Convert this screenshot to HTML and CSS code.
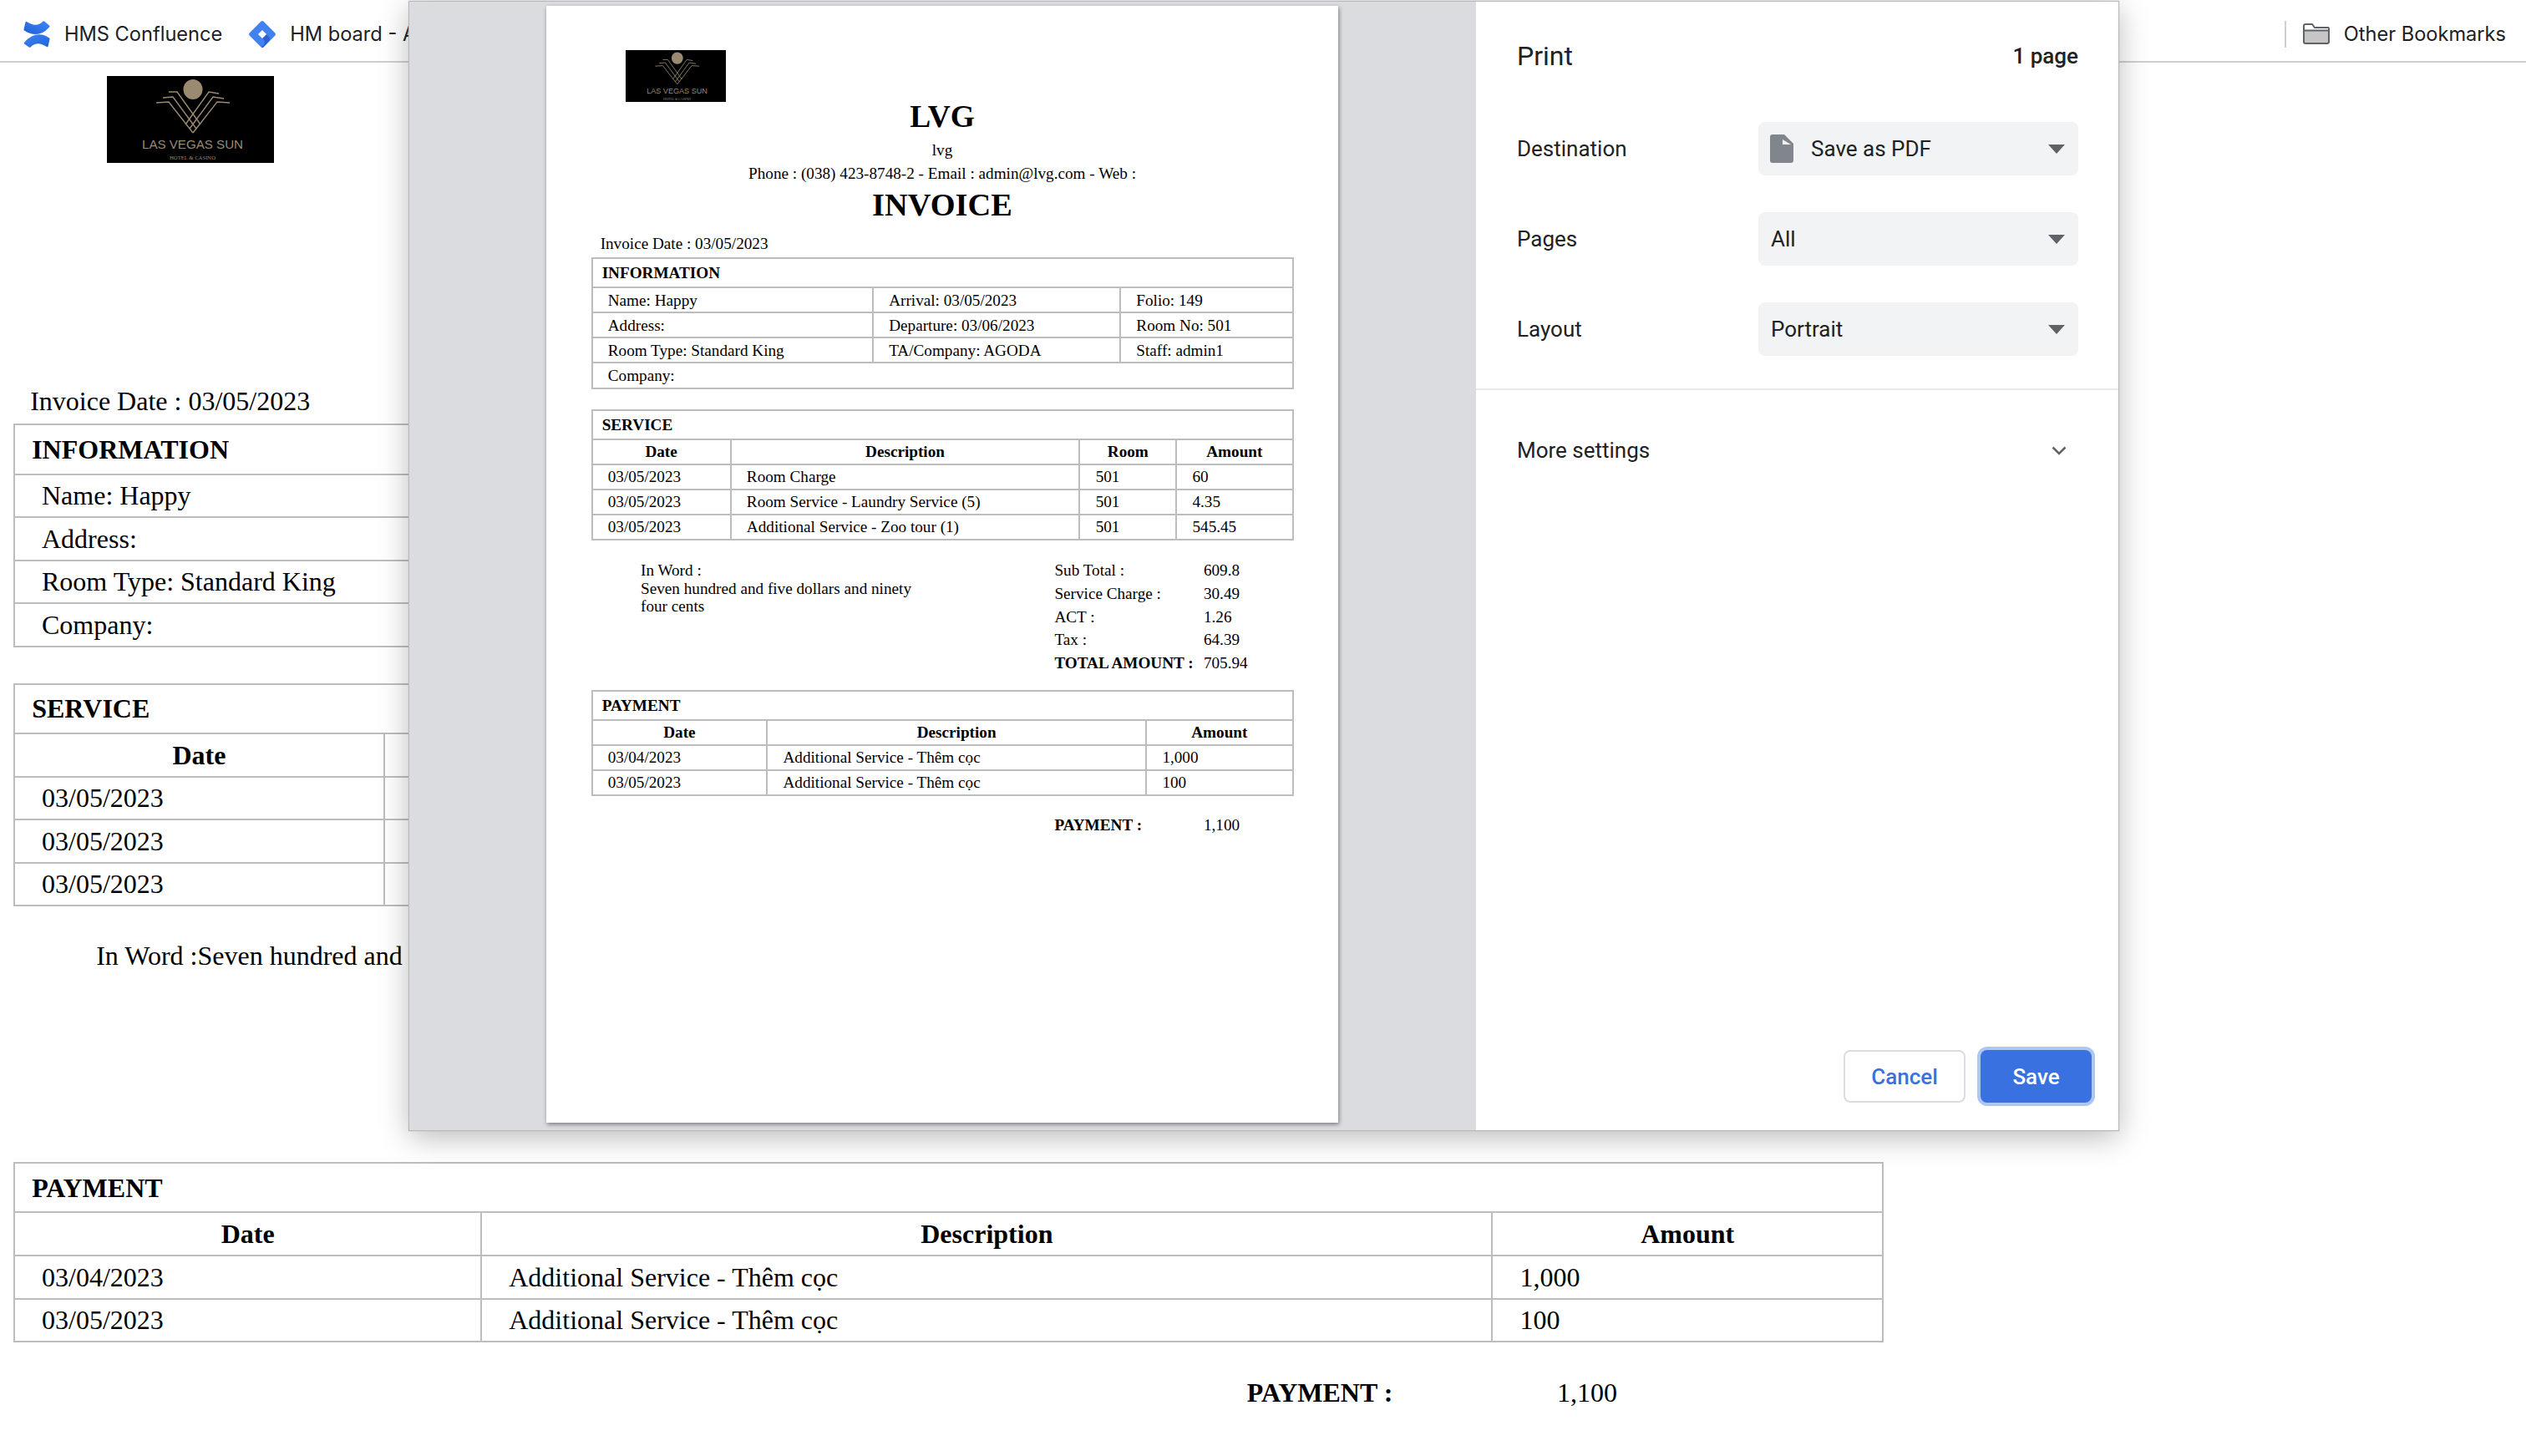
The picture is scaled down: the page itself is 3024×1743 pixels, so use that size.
FILE: index.html
```html
<!DOCTYPE html>
<html lang="en">
<head>
  <meta charset="UTF-8">
  <title>Invoice - Print</title>
  <link rel="stylesheet" href="styles.css">
</head>

<body>
  <!-- Logo used by both the page and the print preview -->
  <svg class="svg-defs" aria-hidden="true">
    <symbol id="lvg-logo" viewBox="0 0 200 104" preserveAspectRatio="none">
      <rect width="200" height="104" fill="#000"/>
      <ellipse cx="103" cy="16" rx="11.5" ry="12" fill="#9a8a72"/>
      <g fill="none" stroke="#9a8a72" stroke-width="1.4">
        <path d="M74 19 L84 19 L112 58"/>
        <path d="M67 26 L79 25 L107 63"/>
        <path d="M59 32 L74 31 L103 68"/>
        <path d="M134 21 L122 19 L94 58"/>
        <path d="M140 27 L127 25 L99 63"/>
        <path d="M147 32 L132 31 L103 68"/>
      </g>
      <text class="logo-name" x="42" y="87" textLength="121" lengthAdjust="spacingAndGlyphs">LAS VEGAS SUN</text>
      <text class="logo-sub" x="75" y="100" textLength="55" lengthAdjust="spacingAndGlyphs">HOTEL &amp; CASINO</text>
    </symbol>
  </svg>

  <!-- BOOKMARKS BAR -->
  <div class="bookmarks">
    <div class="bookmark">
      <svg class="bookmark-icon" viewBox="0 0 32 32">
        <defs>
          <linearGradient id="conf-a" x1="0" y1="1" x2="1" y2="0">
            <stop offset="0" stop-color="#1f5fd6"/>
            <stop offset="1" stop-color="#3f87f5"/>
          </linearGradient>
          <linearGradient id="conf-b" x1="0" y1="0" x2="1" y2="1">
            <stop offset="0" stop-color="#3f87f5"/>
            <stop offset="1" stop-color="#1f5fd6"/>
          </linearGradient>
        </defs>
        <path fill="url(#conf-a)" d="M0.5 10 L2.5 1.5 Q3 0.5 4 1 C11 5 17 7 23.5 0.5 Q24.5 -0.2 25.5 0.7 L31 5.5 Q32 6.5 31 7.5 C22 18 11 18 1 11.5 Q0.3 11 0.5 10Z"/>
        <path fill="url(#conf-b)" d="M1 26 C11 14.5 22 14 31 20.5 Q31.7 21 31.5 22 L29.5 30.5 Q29 31.6 28 31 C21 27 15 25 8.5 31.5 Q7.5 32.2 6.5 31.3 L1 27.5 Q0.4 27 1 26Z"/>
      </svg>
      <span>HMS Confluence</span>
    </div>
    <div class="bookmark">
      <svg class="bookmark-icon" viewBox="0 0 32 32">
        <path fill="#4282f0" d="M14.6 0.6 Q16 -0.4 17.4 0.6 L31.4 14.6 Q32.4 16 31.4 17.4 L17.4 31.4 Q16 32.4 14.6 31.4 L0.6 17.4 Q-0.4 16 0.6 14.6Z"/>
        <path fill="#2a62d2" d="M16 21 L21 16 L24.5 20 Q26 23 23 25.5 L17.4 31.4 Q16 32.2 15.5 31 C20 27 20 24 16 21Z"/>
        <path fill="#fff" d="M16 11 L21 16 L16 21 L11 16Z"/>
      </svg>
      <span>HM board - Agile Board</span>
    </div>
    <div class="bookmark bookmark-other">
      <svg class="folder-icon" viewBox="0 0 32 25">
        <path fill="#c6c6c6" d="M2 9 H30 V23 H2Z"/>
        <path fill="none" stroke="#5f6368" stroke-width="2" d="M1 3 a2 2 0 0 1 2 -2 H11 L14 5 H30 a1 1 0 0 1 1 1 V22 a2 2 0 0 1 -2 2 H3 a2 2 0 0 1 -2 -2Z M1 8.500 H31"/>
      </svg>
      <span>Other Bookmarks</span>
    </div>
  </div>

  <!-- INVOICE PAGE BEHIND THE DIALOG (what the dialog covers stays blank) -->
  <div class="doc doc-screen">
    <svg class="doc-logo"><use href="#lvg-logo"/></svg>
    <div class="doc-company">&nbsp;</div>
    <div class="doc-line doc-short">&nbsp;</div>
    <div class="doc-line doc-contact">&nbsp;</div>
    <div class="doc-heading">&nbsp;</div>
    <div class="doc-date">Invoice Date : 03/05/2023</div>

    <table class="doc-table doc-info">
      <colgroup><col class="col-a"><col class="col-b"><col class="col-c"></colgroup>
      <tr><th class="doc-section" colspan="3">INFORMATION</th></tr>
      <tr><td>Name: Happy</td><td></td><td></td></tr>
      <tr><td>Address:</td><td></td><td></td></tr>
      <tr><td>Room Type: Standard King</td><td></td><td></td></tr>
      <tr><td colspan="3">Company:</td></tr>
    </table>

    <table class="doc-table doc-service">
      <colgroup><col class="col-a"><col class="col-b"><col class="col-c"><col class="col-d"></colgroup>
      <tr><th class="doc-section" colspan="4">SERVICE</th></tr>
      <tr><th>Date</th><th></th><th></th><th></th></tr>
      <tr><td>03/05/2023</td><td></td><td></td><td></td></tr>
      <tr><td>03/05/2023</td><td></td><td></td><td></td></tr>
      <tr><td>03/05/2023</td><td></td><td></td><td></td></tr>
    </table>

    <div class="doc-summary doc-summary-main">
      <div class="doc-words">In Word :Seven hundred and</div>
    </div>

    <table class="doc-table doc-payment">
      <colgroup><col class="col-a"><col class="col-b"><col class="col-c"></colgroup>
      <tr><th class="doc-section" colspan="3">PAYMENT</th></tr>
      <tr><th>Date</th><th>Description</th><th>Amount</th></tr>
      <tr><td>03/04/2023</td><td>Additional Service - Thêm cọc</td><td>1,000</td></tr>
      <tr><td>03/05/2023</td><td>Additional Service - Thêm cọc</td><td>100</td></tr>
    </table>

    <div class="doc-summary doc-paid">
      <div class="doc-words"></div>
      <div class="doc-totals">
        <b>PAYMENT :</b><span>1,100</span>
      </div>
    </div>
  </div>

  <!-- PRINT DIALOG -->
  <div class="print-dialog">
    <div class="preview">
      <div class="preview-page">
        <div class="doc doc-print">
          <svg class="doc-logo"><use href="#lvg-logo"/></svg>
          <div class="doc-company">LVG</div>
          <div class="doc-line doc-short">lvg</div>
          <div class="doc-line doc-contact">Phone : (038) 423-8748-2 - Email : admin@lvg.com - Web :</div>
          <div class="doc-heading">INVOICE</div>
          <div class="doc-date">Invoice Date : 03/05/2023</div>

          <table class="doc-table doc-info">
            <colgroup><col class="col-a"><col class="col-b"><col class="col-c"></colgroup>
            <tr><th class="doc-section" colspan="3">INFORMATION</th></tr>
            <tr><td>Name: Happy</td><td>Arrival: 03/05/2023</td><td>Folio: 149</td></tr>
            <tr><td>Address:</td><td>Departure: 03/06/2023</td><td>Room No: 501</td></tr>
            <tr><td>Room Type: Standard King</td><td>TA/Company: AGODA</td><td>Staff: admin1</td></tr>
            <tr><td colspan="3">Company:</td></tr>
          </table>

          <table class="doc-table doc-service">
            <colgroup><col class="col-a"><col class="col-b"><col class="col-c"><col class="col-d"></colgroup>
            <tr><th class="doc-section" colspan="4">SERVICE</th></tr>
            <tr><th>Date</th><th>Description</th><th>Room</th><th>Amount</th></tr>
            <tr><td>03/05/2023</td><td>Room Charge</td><td>501</td><td>60</td></tr>
            <tr><td>03/05/2023</td><td>Room Service - Laundry Service (5)</td><td>501</td><td>4.35</td></tr>
            <tr><td>03/05/2023</td><td>Additional Service - Zoo tour (1)</td><td>501</td><td>545.45</td></tr>
          </table>

          <div class="doc-summary">
            <div class="doc-words">In Word :<br>Seven hundred and five dollars and ninety four cents</div>
            <div class="doc-totals">
              <span>Sub Total :</span><span>609.8</span>
              <span>Service Charge :</span><span>30.49</span>
              <span>ACT :</span><span>1.26</span>
              <span>Tax :</span><span>64.39</span>
              <b>TOTAL AMOUNT :</b><span>705.94</span>
            </div>
          </div>

          <table class="doc-table doc-payment">
            <colgroup><col class="col-a"><col class="col-b"><col class="col-c"></colgroup>
            <tr><th class="doc-section" colspan="3">PAYMENT</th></tr>
            <tr><th>Date</th><th>Description</th><th>Amount</th></tr>
            <tr><td>03/04/2023</td><td>Additional Service - Thêm cọc</td><td>1,000</td></tr>
            <tr><td>03/05/2023</td><td>Additional Service - Thêm cọc</td><td>100</td></tr>
          </table>

          <div class="doc-summary doc-paid">
            <div class="doc-words"></div>
            <div class="doc-totals">
              <b>PAYMENT :</b><span>1,100</span>
            </div>
          </div>
        </div>
      </div>
    </div>

    <div class="print-side">
      <div class="print-head">
        <div class="print-title">Print</div>
        <div class="print-count">1 page</div>
      </div>

      <div class="print-settings">
        <div class="print-row">
          <div class="print-label">Destination</div>
          <div class="print-select">
            <svg class="doc-icon" viewBox="0 0 28 34">
              <path fill="#80868b" d="M3 0 H17 L28 11 V31 a3 3 0 0 1 -3 3 H3 a3 3 0 0 1 -3 -3 V3 a3 3 0 0 1 3 -3Z"/>
              <path fill="#f1f3f4" d="M15 6 L25 12 H15Z"/>
            </svg>
            <span>Save as PDF</span>
            <i class="select-arrow"></i>
          </div>
        </div>
        <div class="print-row">
          <div class="print-label">Pages</div>
          <div class="print-select">
            <span>All</span>
            <i class="select-arrow"></i>
          </div>
        </div>
        <div class="print-row">
          <div class="print-label">Layout</div>
          <div class="print-select">
            <span>Portrait</span>
            <i class="select-arrow"></i>
          </div>
        </div>
      </div>

      <div class="print-more">
        <span>More settings</span>
        <svg class="chevron" viewBox="0 0 18 11">
          <path fill="none" stroke="#5f6368" stroke-width="2.500" d="M1.500 1.500 L9 9 L16.500 1.500"/>
        </svg>
      </div>

      <div class="print-actions">
        <button class="btn btn-cancel">Cancel</button>
        <button class="btn btn-save">Save</button>
      </div>
    </div>
  </div>
</body>
</html>
```

FILE: styles.css
```css
/* ===============================
   BASE
=============================== */
html, body {
  margin: 0;
  padding: 0;
  height: 100%;
  overflow: hidden;
  background: #fff;
}
body {
  font-family: 'Roboto', sans-serif;
  color: #202124;
}
.svg-defs {
  display: none;
}
.logo-name {
  font-family: 'Liberation Sans', sans-serif;
  font-size: 15.5px;
  fill: #9a8a72;
}
.logo-sub {
  font-family: 'Liberation Serif', serif;
  font-size: 5.5px;
  fill: #9a8a72;
}

/* ===============================
   BOOKMARKS BAR
=============================== */
.bookmarks {
  display: flex;
  align-items: center;
  height: 65px;
  padding: 8px 24px 0 28px;
  border-bottom: 2px solid #cfcfcf;
  font-family: 'Inter', sans-serif;
  font-size: 23.6px;
}
.bookmark {
  display: flex;
  align-items: center;
  gap: 17px;
  margin-right: 32px;
  white-space: nowrap;
}
.bookmark-icon {
  width: 32px;
  height: 32px;
}
.bookmark-other {
  margin: 0 0 0 auto;
  height: 32px;
  padding-left: 20px;
  border-left: 2px solid #cfcfcf;
}
.folder-icon {
  width: 32px;
  height: 25px;
}

/* ===============================
   INVOICE (sizes in em so it scales)
=============================== */
.doc {
  font-family: 'Liberation Serif', serif;
  line-height: 1.2;
  color: #000;
}
.doc-screen {
  font-size: 32px;
  width: 2239px;
  margin-left: 16px;
  padding-top: 16px;
  --table-gap: 1.35em;
  --label-col: 11.6em;
  --row-height: 1.61em;
  --section-height: 1.85em;
  --section-pad: 0.63em;
  --cell-pad: 1em;
}
.doc-print {
  font-size: 19.2px;
  --table-gap: 1.25em;
  --label-col: 9.3em;
  --row-height: 1.57em;
  --section-height: 1.82em;
  --section-pad: 0.58em;
  --cell-pad: 0.95em;
}
.doc-logo {
  display: block;
  width: 6.25em;
  height: 3.25em;
  margin-bottom: -0.18em;
}
.doc-screen .doc-logo {
  margin-left: 3.5em;
}
.doc-print .doc-logo {
  margin-left: 2.15em;
}
.doc-company,
.doc-heading,
.doc-line {
  text-align: center;
}
.doc-company {
  font-size: 1.95em;
  font-weight: bold;
  line-height: 1.12;
}
.doc-short {
  margin-top: 0.39em;
}
.doc-contact {
  margin-top: 0.26em;
}
.doc-heading {
  font-size: 2em;
  font-weight: bold;
  line-height: 1.15;
  margin-top: 0.09em;
}
.doc-date {
  margin: 0.68em 0 0.26em var(--section-pad);
}
.doc-screen .doc-date {
  margin-top: 0.77em;
}
.doc-table {
  width: 100%;
  table-layout: fixed;
  border-collapse: collapse;
  border: 2px solid #bdbdbd;
}
.doc-table th,
.doc-table td {
  height: var(--row-height);
  padding: 0 0 0 var(--cell-pad);
  border: 2px solid #bdbdbd;
  box-sizing: border-box;
  white-space: nowrap;
  text-align: left;
  vertical-align: middle;
  font-weight: normal;
}
.doc-table th {
  padding: 0;
  text-align: center;
  font-weight: bold;
}
.doc-table .doc-section {
  height: var(--section-height);
  padding-left: var(--section-pad);
  text-align: left;
}
.doc-info {
  margin-bottom: var(--table-gap);
}
.doc-info .col-a { width: 40.1%; }
.doc-info .col-b { width: 35.3%; }
.doc-info .col-c { width: 24.6%; }
.doc-service .col-a { width: 19.8%; }
.doc-service .col-b { width: 49.8%; }
.doc-service .col-c { width: 13.8%; }
.doc-service .col-d { width: 16.6%; }
.doc-payment .col-a { width: 25%; }
.doc-payment .col-b { width: 54.1%; }
.doc-payment .col-c { width: 20.9%; }

.doc-summary {
  display: flex;
  margin: 1.15em 0 0.95em;
  padding-left: 3.1em;
}
.doc-screen .doc-summary-main {
  height: 7.2em;
  margin-bottom: 1.22em;
}
.doc-print .doc-paid {
  margin-top: 1.08em;
}
.doc-words {
  flex: 0 0 25.8em;
  box-sizing: border-box;
  padding-right: 8em;
  padding-top: 0.15em;
  line-height: 1.12;
}
.doc-screen .doc-words {
  flex-basis: 43.05em;
  padding-right: 0;
  white-space: nowrap;
}
.doc-totals {
  display: grid;
  grid-template-columns: var(--label-col) auto;
  grid-auto-rows: 1.44em;
  align-items: center;
  white-space: nowrap;
}

/* ===============================
   PRINT DIALOG
=============================== */
.print-dialog {
  position: absolute;
  top: 2px;
  left: 490px;
  width: 2046px;
  height: 1351px;
  display: flex;
  background: #fff;
  box-shadow: 0 0 1px 1px #b8b8b8, 0 8px 34px rgba(0, 0, 0, 0.28);
}
.preview {
  flex: 0 0 1277px;
  display: flex;
  justify-content: center;
  align-items: flex-start;
  padding: 5px 2px 0 0;
  box-sizing: border-box;
  background: #dadce0;
}
.preview-page {
  width: 948px;
  height: 1337px;
  padding: 53px 53px 0 54px;
  box-sizing: border-box;
  background: #fff;
  box-shadow: 1px 2px 5px rgba(0, 0, 0, 0.45);
}

/* Sidebar */
.print-side {
  flex: 1;
  display: flex;
  flex-direction: column;
  font-size: 26px;
}
.print-head {
  display: flex;
  justify-content: space-between;
  align-items: center;
  height: 50px;
  margin: 40px 48px 54px 49px;
}
.print-title {
  font-size: 32px;
}
.print-count {
  font-weight: 500;
}
.print-settings {
  display: flex;
  flex-direction: column;
  gap: 44px;
  padding: 0 48px 39px 49px;
  border-bottom: 2px solid #e8eaed;
}
.print-row {
  display: flex;
  justify-content: space-between;
  align-items: center;
}
.print-select {
  display: flex;
  align-items: center;
  gap: 21px;
  width: 383px;
  height: 64px;
  padding: 0 16px 0 15px;
  box-sizing: border-box;
  border-radius: 8px;
  background: #f1f3f4;
}
.doc-icon {
  width: 28px;
  height: 34px;
  margin-left: -1px;
}
.select-arrow {
  margin-left: auto;
  border-top: 11px solid #5f6368;
  border-left: 10px solid transparent;
  border-right: 10px solid transparent;
}
.print-more {
  display: flex;
  justify-content: space-between;
  align-items: center;
  height: 144px;
  padding: 0 62px 0 49px;
}
.chevron {
  width: 18px;
  height: 11px;
}
.print-actions {
  display: flex;
  justify-content: flex-end;
  gap: 18px;
  margin-top: auto;
  padding: 0 32px 33px 0;
}
.btn {
  height: 63px;
  border-radius: 8px;
  box-sizing: border-box;
  font-family: 'Roboto', sans-serif;
  font-size: 26px;
  font-weight: 500;
}
.btn-cancel {
  width: 146px;
  border: 2px solid #dadce0;
  background: #fff;
  color: #3a71e0;
}
.btn-save {
  width: 133px;
  border: 0;
  background: #3a71e0;
  color: #fff;
  box-shadow: 0 0 0 4px #aec6f2;
}
```
